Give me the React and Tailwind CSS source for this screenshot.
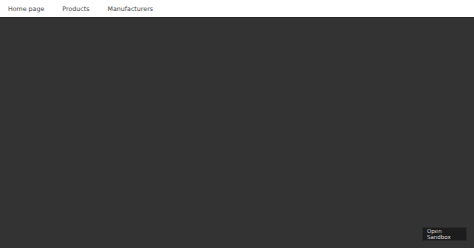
export default function App() {
  return (
    <div className="flex flex-col h-[248px] w-[474px] bg-[#333333] font-['DejaVu_Sans',sans-serif]">
      <nav className="flex items-center h-[17px] bg-white pl-[8px] pt-[1px] gap-[18px] text-[6.3px] text-[#444444]">
        <span>Home page</span>
        <span>Products</span>
        <span>Manufacturers</span>
      </nav>
      <div className="h-px bg-[#262626]" />
      <main className="flex-1 flex items-end justify-end pr-[7px] pb-[7px]">
        <button className="w-[45px] h-[14px] bg-[#1c1c1c] border border-[#2a2a2a] text-left pl-[4px] text-[5.5px] leading-[6px] text-[#dddddd]">
          Open
          <br />
          Sandbox
        </button>
      </main>
    </div>
  );
}
